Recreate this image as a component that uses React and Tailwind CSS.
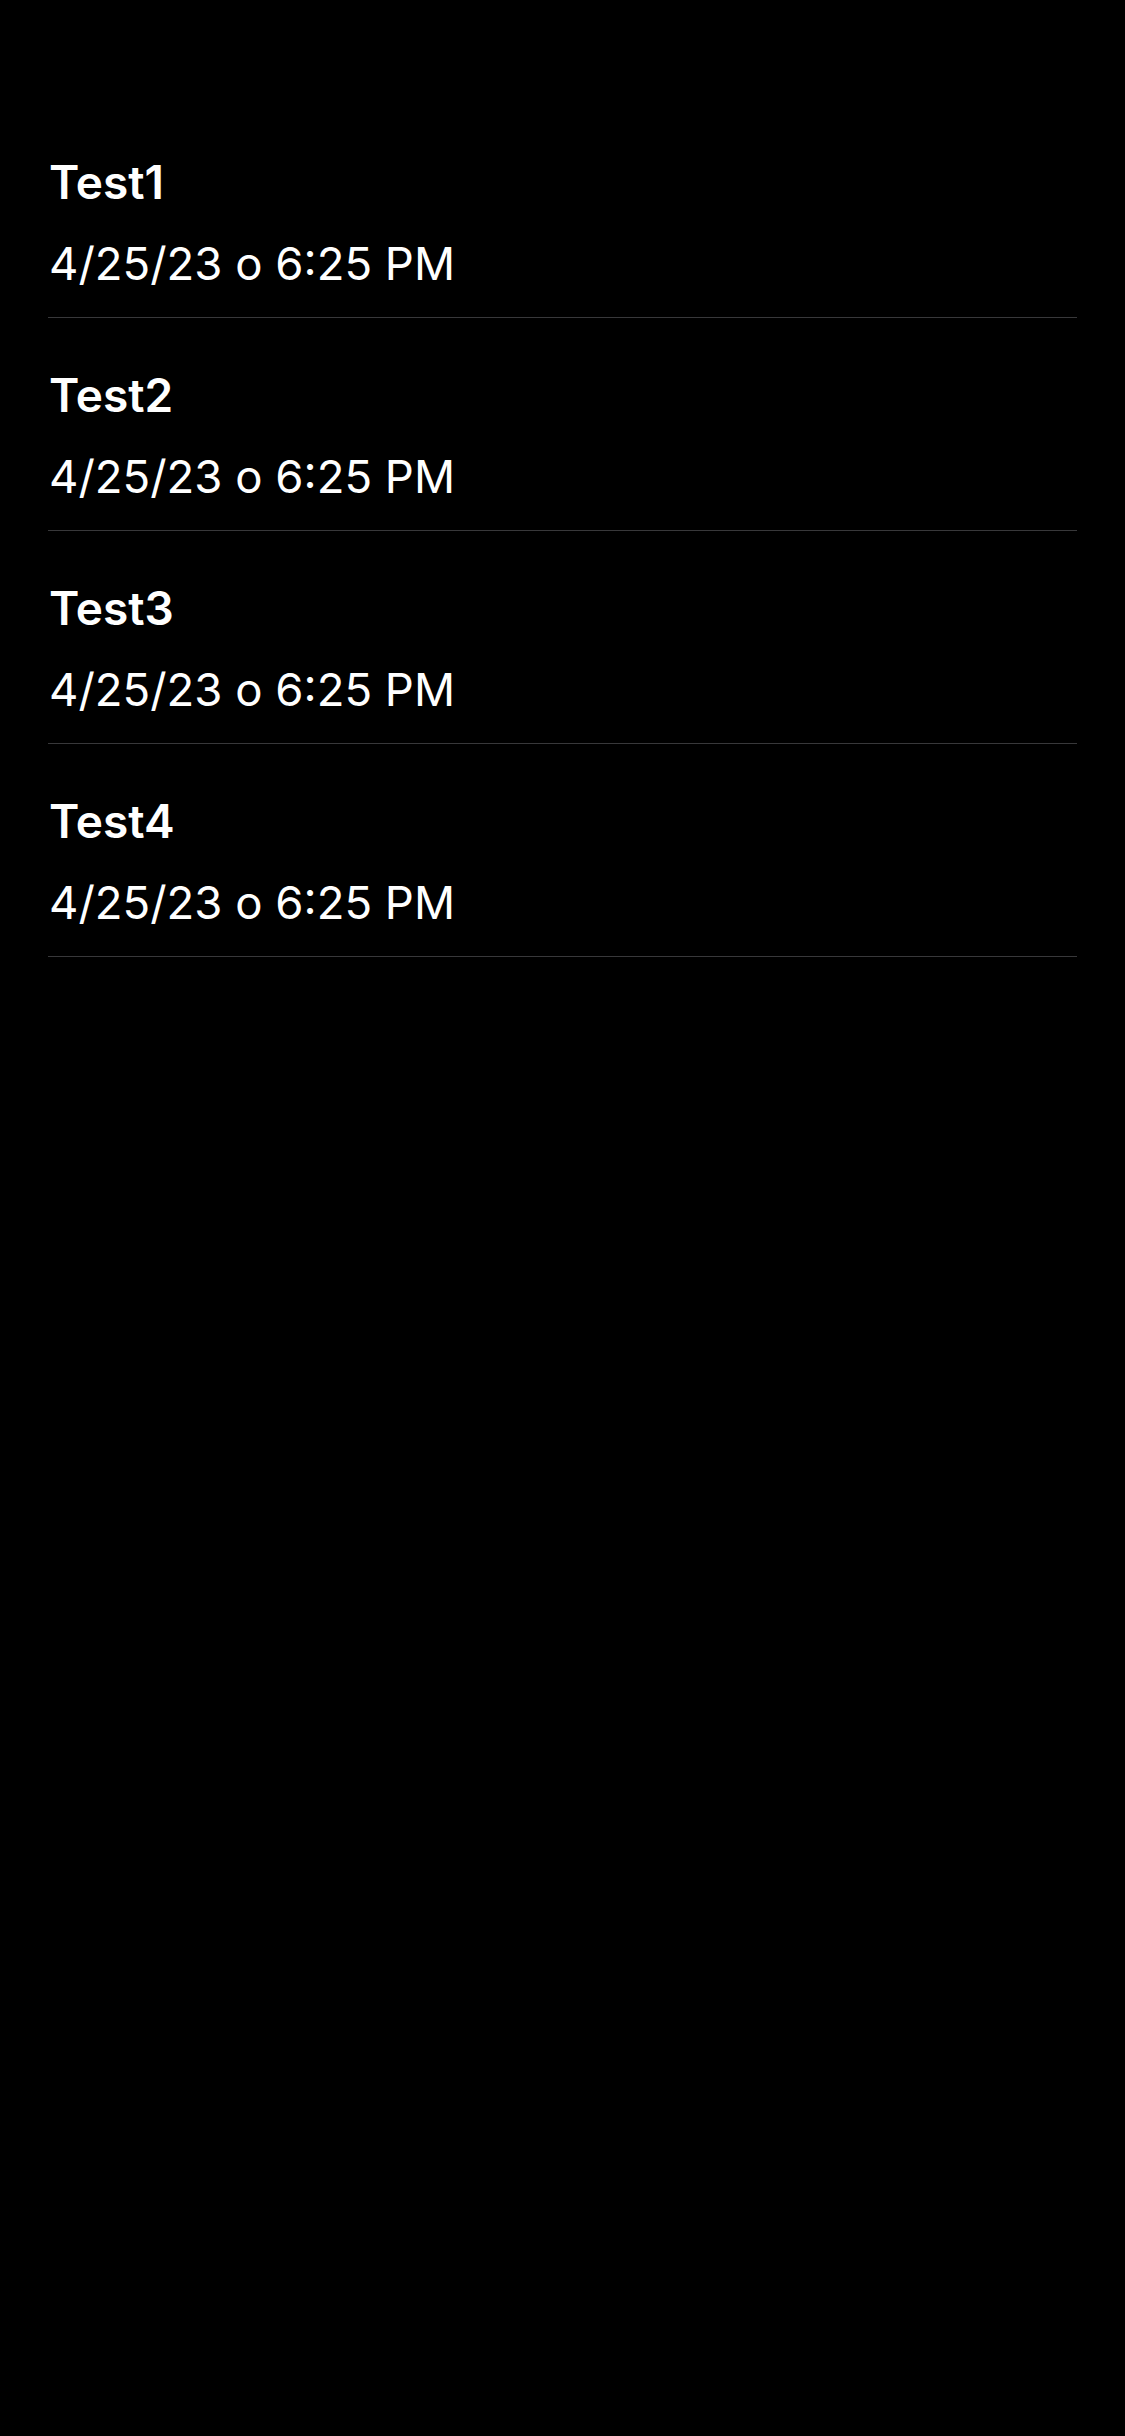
export default function App() {
  const items = ["Test1", "Test2", "Test3", "Test4"];
  return (
    <div
      className="w-[1125px] h-[2436px] bg-black text-white"
      style={{ fontFamily: 'Inter, "Noto Sans", sans-serif' }}
    >
      <div className="pt-[105px] ml-[48px] w-[1029px] flex flex-col">
        {items.map((t) => (
          <div key={t} className="pt-[49px] pb-[25px] border-b border-[#38383a] pl-[1px]">
            <div className="text-[46px] leading-[56px] font-semibold">{t}</div>
            <div className="mt-[26px] text-[45.5px] leading-[56px] font-normal">4/25/23 o 6:25 PM</div>
          </div>
        ))}
      </div>
    </div>
  );
}
